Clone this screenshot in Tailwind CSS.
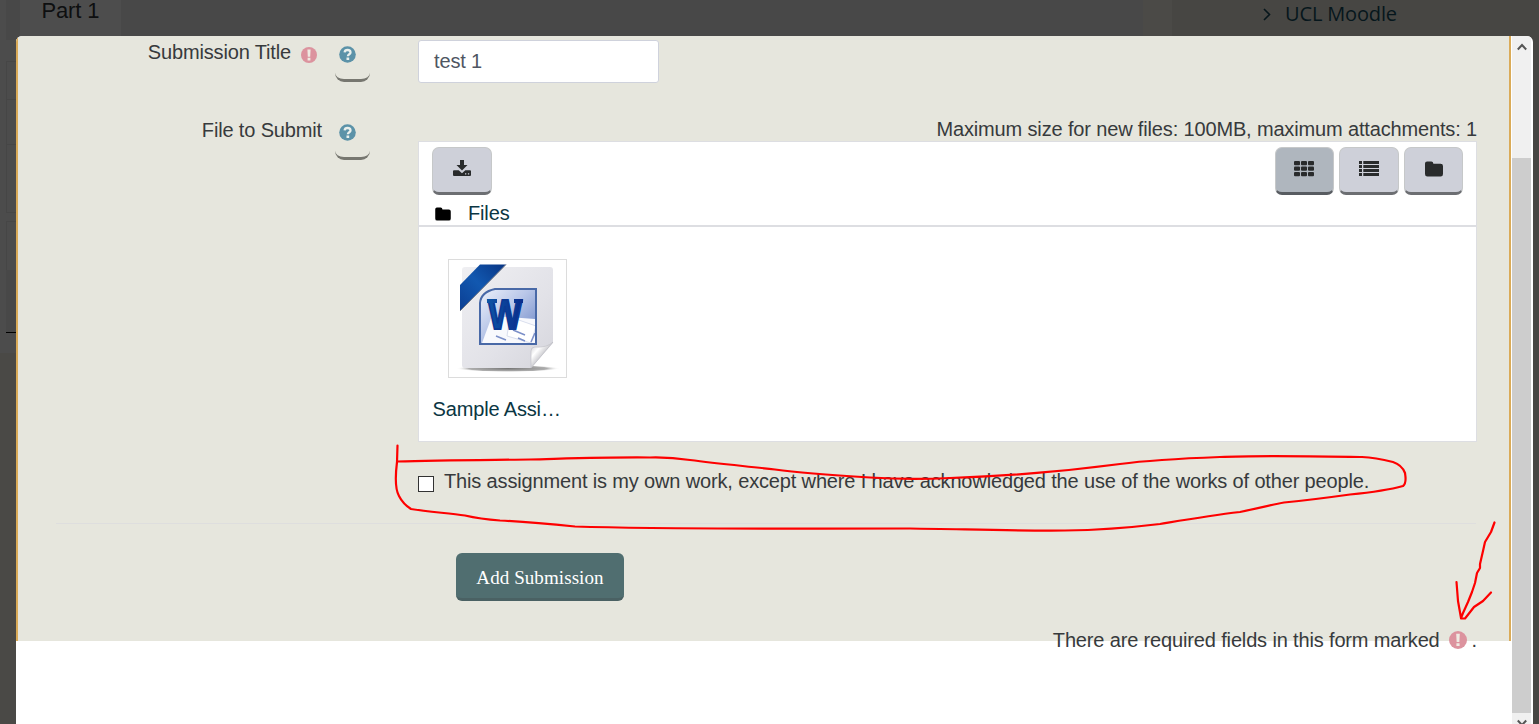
<!DOCTYPE html>
<html lang="en">
<head>
<meta charset="utf-8">
<title>Submit Paper</title>
<script src="https://cdn.jsdelivr.net/npm/@tailwindcss/browser@4"></script>
</head>
<body class="relative h-[724px] w-[1539px] overflow-hidden bg-[#474643] font-['Liberation_Sans',Arial,sans-serif] text-[20px] leading-[30px] tracking-[-0.15px] text-[#373a3c]">
<svg width="0" height="0" class="absolute">
  <defs>
    <symbol id="excl" viewBox="0 0 16 16"><circle cx="8" cy="8" r="8" fill="#dc939e"/><path d="M6.4 2.500h3.200l-.4 7.200H6.800z M6.600 10.800h2.800v2.600H6.600z" fill="#efeae2"/></symbol>
    <symbol id="quest" viewBox="0 0 17 17"><circle cx="8.5" cy="8.5" r="8.3" fill="#5b92a8"/><path d="M5.600 6.400C5.800 4.700 7 4 8.500 4c1.800 0 3 .9 3 2.400 0 1.900-2.600 1.800-2.600 3.900" fill="none" stroke="#e9efec" stroke-width="2.300"/><path d="M7.500 11.500h2.700v2.400H7.500z" fill="#e9efec"/></symbol>
    <symbol id="folder" viewBox="0 0 18 16"><path d="M0 2.6Q0 .5 2.1.5h4.2Q8.2.5 8.4 2.8h7.2Q18 2.8 18 5v8q0 2.5-2.4 2.5H2.4Q0 15.500 0 13z"/></symbol>
  </defs>
</svg>

<!-- Dimmed page behind the dialog -->
<div class="flex h-full w-full">
  <div class="h-full w-[1143px] bg-[#4a4946]">
    <div class="h-[353px] bg-[#4c4c4c] pl-[6px]">
      <div class="flex h-[40px] bg-[#484848] pl-[14px]">
        <div class="h-[36px] w-[101px] bg-[#4d4d4d] pl-[21.500px] text-[22px] leading-[21px] text-[#0e0f10]">Part 1</div>
      </div>
      <div class="mt-[21px] h-[152px] border border-[#464646]">
        <div class="h-[38px] border-b border-[#464646]"></div>
        <div class="h-[45px] border-b border-[#464646]"></div>
      </div>
      <div class="mt-[8px] h-[49px] border border-b-0 border-[#464646]"></div>
      <div class="h-[63px] border-b border-black bg-[#484848]"></div>
    </div>
  </div>
  <div class="h-[353px] w-[29px] bg-[#4b4a47]"></div>
  <div class="flex h-10 flex-1 items-start pl-[91px] font-['Open_Sans',sans-serif] text-[20px] leading-[28px] text-[#06161c]">
    <svg width="8" height="13" viewBox="0 0 8 13" class="mt-[8px] mr-[14px] shrink-0"><path d="M1 1l5.500 5.500L1 12" fill="none" stroke="#06161c" stroke-width="1.600"/></svg>
    <span>UCL Moodle</span>
  </div>
</div>

<!-- Dialog -->
<div class="absolute left-[16px] top-[36px] flex h-[688px] w-[1517px] overflow-hidden rounded-t-[6px] bg-white">
  <div class="w-[1495px]">
    <form class="h-[605px] border-x-2 border-[#daab58] bg-[#e6e6dd]">
      <div class="flex h-[105px] pt-[4px]">
        <div class="flex w-[352px] justify-end">
          <span class="mt-[-3px]">Submission Title</span>
          <svg width="16" height="16" class="mt-[7px] ml-[10px]"><use href="#excl"/></svg>
          <div class="ml-[18px] mt-[-9px] h-[51px] w-[35px] rounded-[9px] border-b-[3px] border-[#777770] pl-[4px] pt-[15px]"><svg width="17" height="17"><use href="#quest"/></svg></div>
        </div>
        <div class="ml-[48px] h-[43px] w-[241px] rounded-[3px] border border-[#cfd2dc] bg-white pl-[15px] leading-[41px] text-[#4f5662]">test 1</div>
      </div>
      <div class="flex h-[300px]">
        <div class="flex w-[352px] justify-end">
          <span class="mt-[-26px]">File to Submit</span>
          <div class="ml-[13px] mt-[-32px] h-[51px] w-[35px] rounded-[9px] border-b-[3px] border-[#777770] pl-[4px] pt-[15px]"><svg width="17" height="17"><use href="#quest"/></svg></div>
        </div>
        <div class="ml-[48px] w-[1059px]">
          <div class="mt-[-27px] h-[27px] text-right">Maximum size for new files: 100MB, maximum attachments: 1</div>
          <div class="h-[301px] border border-[#dddee2] bg-white">
            <div class="flex gap-[5px] pl-[13px] pr-[13px] pt-[5px]">
              <div class="mr-auto flex h-[48px] w-[60px] justify-center rounded-[7px] border border-b-[3px] border-[#c6c8c9] border-b-[#6c6e72] bg-[#ced0d9] pt-[11px]">
                <svg width="18" height="18" viewBox="0 0 18 18" fill="#292b2c"><path d="M7 1h4v5h3.500L9 11.500 3.500 6H7z"/><path fill-rule="evenodd" d="M1 11.300h4.700L9 14.300l3.300-3H17q1 0 1 1v3.600q0 1-1 1H1q-1 0-1-1v-3.600q0-1 1-1zM12 14.200v1.200h1.300v-1.200zM14.900 14.200v1.200h1.300v-1.200z"/></svg>
              </div>
              <div class="flex h-[48px] w-[59px] rounded-[7px] border border-b-[3px] border-[#c6c8c9] border-b-[#585c61] bg-[#afb6be] pl-[18px] pt-[13px]">
                <svg width="20" height="16" viewBox="0 0 20 16" fill="#292b2c"><rect x="0" y="0" width="6" height="4.300" rx="1"/><rect x="7" y="0" width="6" height="4.300" rx="1"/><rect x="14" y="0" width="6" height="4.300" rx="1"/><rect x="0" y="5.500" width="6" height="4.300" rx="1"/><rect x="7" y="5.500" width="6" height="4.300" rx="1"/><rect x="14" y="5.500" width="6" height="4.300" rx="1"/><rect x="0" y="11" width="6" height="4.300" rx="1"/><rect x="7" y="11" width="6" height="4.300" rx="1"/><rect x="14" y="11" width="6" height="4.300" rx="1"/></svg>
              </div>
              <div class="flex h-[48px] w-[60px] justify-center rounded-[7px] border border-b-[3px] border-[#c6c8c9] border-b-[#6c6e72] bg-[#ced0d9] pt-[13px]">
                <svg width="20" height="16" viewBox="0 0 20 16" fill="#292b2c"><path d="M0 0h3v3H0zM0 4h3v3H0zM0 8h3v3H0zM0 12h3v3H0zM4.300 0H20v3H4.300zM4.300 4H20v3H4.300zM4.300 8H20v3H4.300zM4.300 12H20v3H4.300z"/></svg>
              </div>
              <div class="flex h-[48px] w-[59px] justify-center rounded-[7px] border border-b-[3px] border-[#c6c8c9] border-b-[#6c6e72] bg-[#ced0d9] pt-[13px]">
                <svg width="18" height="16" fill="#292b2c"><use href="#folder"/></svg>
              </div>
            </div>
            <div class="flex h-[32px] border-b-2 border-[#dddee2] pl-[16px] text-[#0b3643]">
              <svg width="16" height="14" viewBox="0 0 18 16" class="mt-[12px] mr-[17px]" fill="#000"><use href="#folder"/></svg>
              <span class="mt-[3px]">Files</span>
            </div>
            <div class="ml-[29px] mt-[32px] h-[119px] w-[119px] border border-[#dcdcdc]">
              <svg width="117" height="117" viewBox="0 0 117 117">
                <defs>
                  <linearGradient id="paper" x1="0" y1="0" x2="1" y2="1"><stop offset="0" stop-color="#efeff2"/><stop offset=".6" stop-color="#e2e2e8"/><stop offset="1" stop-color="#d5d5dc"/></linearGradient>
                  <linearGradient id="ribbon" x1="0" y1="1" x2="1" y2="0"><stop offset="0" stop-color="#0b3e92"/><stop offset=".5" stop-color="#1258b0"/><stop offset="1" stop-color="#083584"/></linearGradient>
                  <linearGradient id="sky" x1="0" y1="0" x2="1" y2="1"><stop offset="0" stop-color="#eef2fb"/><stop offset=".45" stop-color="#b8c6e8"/><stop offset="1" stop-color="#6580c2"/></linearGradient>
                  <linearGradient id="fold" x1="0" y1="0" x2="1" y2="1"><stop offset="0" stop-color="#c4c4ca"/><stop offset=".3" stop-color="#fff"/><stop offset=".6" stop-color="#b9b9bf"/></linearGradient>
                  <linearGradient id="ink" x1="0" y1="0" x2="1" y2="0"><stop offset="0" stop-color="#0d55a5"/><stop offset="1" stop-color="#0a2c8c"/></linearGradient>
                  <radialGradient id="shade"><stop offset="0" stop-color="#777"/><stop offset=".75" stop-color="#999" stop-opacity=".8"/><stop offset="1" stop-color="#fff" stop-opacity="0"/></radialGradient>
                </defs>
                <ellipse cx="59" cy="108.500" rx="52" ry="3.500" fill="url(#shade)"/>
                <path d="M16 7h85q3 0 3 3v73L82 108H16q-3 0-3-3V10q0-3 3-3z" fill="url(#paper)"/>
                <path d="M82 108V91q0-4 4-4 12 1 18-5z" fill="url(#fold)" stroke="#bcbcc2" stroke-width=".6"/>
                <path d="M11 51V25L31 4.500h26z" fill="url(#ribbon)"/>
                <path d="M11 51L57 4.500" stroke="#707682" stroke-width="1"/>
                <path d="M45 29h42v55H31V42q0-8 14-13z" fill="url(#sky)"/>
                <path d="M33 83l10-27 43 3v24z" fill="#f8f9fd"/>
                <path d="M61 57l26 9-5 17-24-7z" fill="#fff" stroke="#c3cbe2" stroke-width=".6"/>
                <path d="M47 76l10 4M64 70l12 5M69 78l7 3M82 82l4-9" stroke="#7b8fc8" stroke-width="1.500"/>
                <path d="M46 29h41v55H31V43q1-11 15-14z" fill="none" stroke="#4969a7" stroke-width="2"/>
                <text x="39" y="69" font-family="Liberation Sans" font-weight="bold" font-size="42" textLength="34" letter-spacing="0" lengthAdjust="spacingAndGlyphs" fill="url(#ink)" stroke="#0b3a94" stroke-width="2">W</text>
                <path d="M38 39h10v4H38zM65 39h9v4H65z" fill="url(#ink)"/>
              </svg>
            </div>
            <div class="ml-[13.500px] mt-[16px] text-[#0b3643]">Sample Assi…</div>
          </div>
        </div>
      </div>
      <div class="ml-[400px] flex h-[54px] pt-[25px]">
        <div class="mt-[10px] mr-[10px] h-[16px] w-[16px] border border-[#333] bg-white"></div>
        <span>This assignment is my own work, except where I have acknowledged the use of the works of other people.</span>
      </div>
      <div class="ml-[38px] mt-[28px] h-[30px] w-[1420px] border-t border-[#dedede]"></div>
      <div class="ml-[438px] h-[48px] w-[168px] rounded-[6px] border-b-[3px] border-[#4a6163] bg-[#506e70] text-center font-['Liberation_Serif',serif] text-[19px] leading-[50px] tracking-[0.08px] text-white">Add Submission</div>
      <div class="mr-[32px] mt-[24px] flex justify-end">
        <span>There are required fields in this form marked</span>
        <svg width="18" height="18" class="ml-[9px] mt-[6px] mr-[5px]"><use href="#excl"/></svg>
        <span>.</span>
      </div>
    </form>
  </div>
  <!-- Scrollbar -->
  <div class="ml-px flex w-[19px] flex-col bg-[#f0f0f0]">
    <div class="flex h-[122px] justify-center pt-[7px]"><svg width="10" height="8" viewBox="0 0 10 8"><path d="M.8 6.500L5 2l4.200 4.500" fill="none" stroke="#555" stroke-width="2"/></svg></div>
    <div class="h-[555px] bg-[#cdcdcd]"></div>
    <div class="flex h-[11px] justify-center pt-[6px]"><svg width="10" height="8" viewBox="0 0 10 8"><path d="M.8 1.500L5 6l4.200-4.500" fill="none" stroke="#555" stroke-width="2"/></svg></div>
  </div>
</div>

<!-- Hand-drawn annotations -->
<svg class="pointer-events-none absolute inset-0" width="1539" height="724" fill="none" stroke="#fe0000" stroke-width="2.200" stroke-linecap="round" stroke-linejoin="round">
  <path d="M397.500 445.500L397 462C395.500 474 395 489 399 496Q403 504 411 509C428 512 448 513 465 515.500Q480 519 500 520.500C530 522 550 524 575 526.500C640 528.500 720 529 910 528.500C960 529 1010 531 1065 530.500Q1110 530 1160 524C1190 519 1210 515.500 1240 512C1260 508 1270 505 1284 502.500C1310 500 1325 498 1350 494.500Q1385 491 1403 486C1407 483 1405.500 477 1405 473Q1402 465 1393 462Q1375 457.500 1362 457C1330 456.500 1260 455 1220 457C1180 458.500 1150 460 1120 464C1060 472 1010 476 950 478Q910 480 870 477.500C830 475 790 471.500 775 469.500C750 466.500 720 464 690 460Q670 457 650 457.500C610 457 570 458.500 530 459.500C490 460 440 460 397 461.500"/>
  <path d="M1494.500 522.500L1491 532 1485 542 1483 551 1480 564 1480 568 1477 573 1475 583 1472 592 1468 602 1463 613 1461 618L1458 601 1456.500 582M1461 618.500H1465L1474 607 1483 601 1491 592.500"/>
</svg>
</body>
</html>
